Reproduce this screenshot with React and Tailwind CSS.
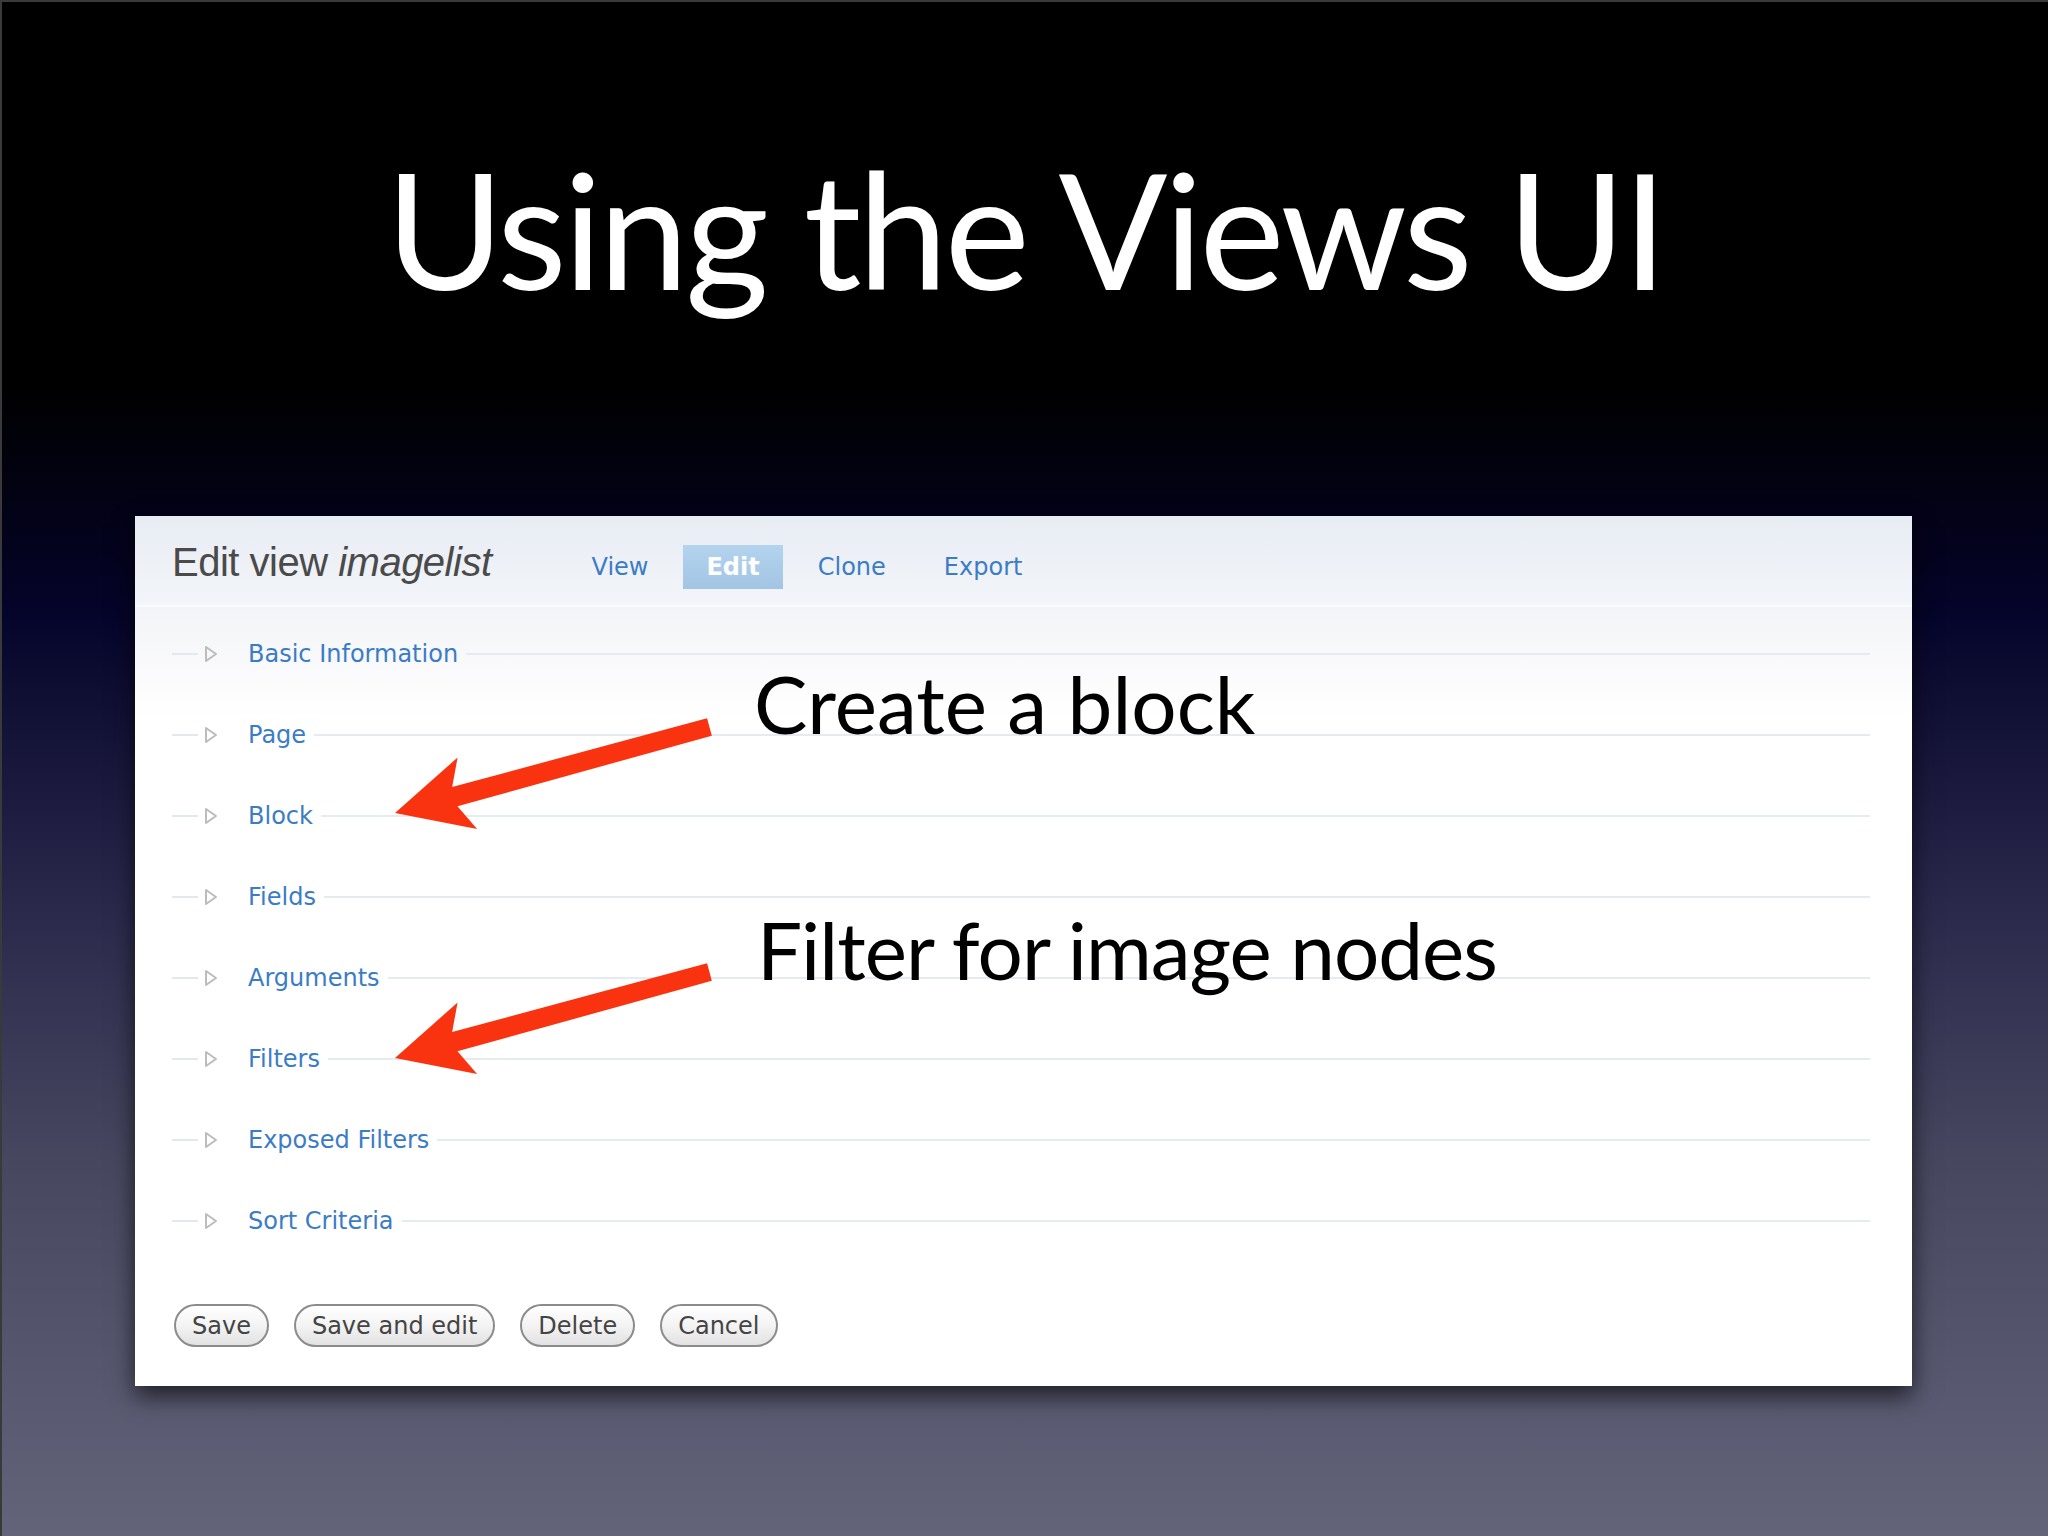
import React from 'react';

const rows = ['Basic Information', 'Page', 'Block', 'Fields', 'Arguments', 'Filters', 'Exposed Filters', 'Sort Criteria'];
const tabs = ['View', 'Edit', 'Clone', 'Export'];
const buttons = ['Save', 'Save and edit', 'Delete', 'Cancel'];

const gill = { fontFamily: 'Lato, "Open Sans", sans-serif' };
const lucida = { fontFamily: '"DejaVu Sans", Verdana, sans-serif' };

const Arrow = ({ x, y }) => (
  <g transform={`translate(${x} ${y}) rotate(-15.3)`}>
    <polygon points="0,0 75,-37 62,-10 326,-9 326,9 62,10 75,37" fill="#f9330f" />
  </g>
);

const Row = ({ label }) => (
  <div className="flex items-center h-[81px]">
    <div className="w-[26px] h-[2px] bg-[#e3e7ee]" />
    <svg width="14" height="18" viewBox="0 0 14 18" className="ml-[6px]">
      <polygon points="2,2 12,9 2,16" fill="none" stroke="#bcbcbc" strokeWidth="2" strokeLinejoin="round" />
    </svg>
    <span className="ml-[30px] text-[24px] text-[#3b7cc6] leading-none" style={lucida}>{label}</span>
    <div className="flex-1 ml-[8px] h-[2px] bg-[#e6eaf1]" />
  </div>
);

export default function App() {
  return (
    <div className="w-[2048px] h-[1536px] overflow-hidden border-l-2 border-t-2 border-[#3a3a3a] bg-[linear-gradient(180deg,#000_0%,#000_25%,#05042a_40%,#28274a_58%,#46465f_75%,#63637a_100%)]">
      {/* Slide title */}
      <h1 className="pt-[145px] text-center text-white text-[161px] leading-none tracking-[-3.3px]" style={gill}>
        Using the Views UI
      </h1>

      {/* Screenshot panel */}
      <div className="relative mt-[208px] ml-[133px] w-[1777px] h-[870px] bg-white shadow-[0_10px_22px_rgba(0,0,0,0.65)]">
        <div className="flex items-center h-[91px] pl-[37px] bg-[linear-gradient(180deg,#e8edf4,#f2f5f9)] border-b-2 border-[#fafbfd]">
          <span className="text-[40px] text-[#4a4a4a] tracking-[-0.5px] mt-[2px]" style={{ fontFamily: '"Liberation Sans", Arial, sans-serif' }}>
            Edit view <i>imagelist</i>
          </span>
          <div className="flex items-center gap-[12px] ml-[77px] mt-[12px]">
            {tabs.map((t) =>
              t === 'Edit' ? (
                <span key={t} className="px-[23px] h-[44px] flex items-center bg-[linear-gradient(180deg,#b3d3ee,#a3c5e4)] text-white font-bold text-[24px]" style={lucida}>
                  {t}
                </span>
              ) : (
                <span key={t} className="px-[23px] h-[44px] flex items-center text-[#3b7cc6] text-[24px]" style={lucida}>
                  {t}
                </span>
              )
            )}
          </div>
        </div>

        <div className="pl-[37px] pr-[42px] pt-[6px] bg-[linear-gradient(180deg,#f3f4f7,#ffffff_110px)]">
          {rows.map((r) => (
            <Row key={r} label={r} />
          ))}
          <div className="flex items-center gap-[25px] mt-[43px] pl-[2px]">
            {buttons.map((b) => (
              <button
                key={b}
                type="button"
                className="h-[43px] px-[16px] rounded-full border-2 border-[#8c8c8c] bg-[linear-gradient(180deg,#ffffff,#f3f3f3_50%,#e2e2e2)] text-[24px] text-[#444] leading-none shadow-[inset_0_1px_0_#fff]"
                style={lucida}
              >
                {b}
              </button>
            ))}
          </div>
        </div>

        {/* Annotations over the screenshot */}
        <svg className="absolute inset-0 pointer-events-none" width="1777" height="870" viewBox="0 0 1777 870">
          <Arrow x={260} y={297} />
          <Arrow x={260} y={542} />
        </svg>
        <div className="absolute left-[619px] top-[147px] text-[80px] leading-none text-black" style={gill}>
          Create a block
        </div>
        <div className="absolute left-[622px] top-[393px] text-[80px] leading-none tracking-[-1px] text-black" style={gill}>
          Filter for image nodes
        </div>
      </div>
    </div>
  );
}
